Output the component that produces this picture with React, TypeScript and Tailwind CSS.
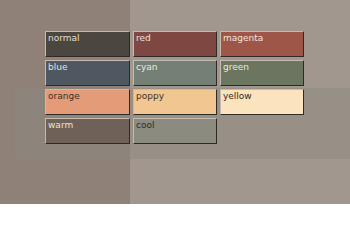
const swatches = [
  { name: 'normal', bg: 'bg-[#4b473e]', text: 'text-[#e6ded4]' },
  { name: 'red', bg: 'bg-[#7f4742]', text: 'text-[#eee2da]' },
  { name: 'magenta', bg: 'bg-[#9e5648]', text: 'text-[#f2e4dc]' },
  { name: 'blue', bg: 'bg-[#4f5861]', text: 'text-[#e2e0dc]' },
  { name: 'cyan', bg: 'bg-[#747f76]', text: 'text-[#ece8e0]' },
  { name: 'green', bg: 'bg-[#6b755f]', text: 'text-[#ece8e0]' },
  { name: 'orange', bg: 'bg-[#e39c77]', text: 'text-[#3a302a]' },
  { name: 'poppy', bg: 'bg-[#f2c690]', text: 'text-[#3a302a]' },
  { name: 'yellow', bg: 'bg-[#fbe3bd]', text: 'text-[#2e2824]' },
  { name: 'warm', bg: 'bg-[#6f6157]', text: 'text-[#ece4dc]' },
  { name: 'cool', bg: 'bg-[#8b8b80]', text: 'text-[#2e2a26]' },
]

function Swatch({ name, bg, text }: { name: string; bg: string; text: string }) {
  return (
    <div
      className={`h-[26px] border border-t-[#c4bab0] border-l-[#c4bab0] border-r-[#2e2a25] border-b-[#2e2a25] pl-[2px] pt-[1px] text-[9px] leading-[11px] ${bg} ${text}`}
      style={{ fontFamily: '"DejaVu Sans", sans-serif' }}
    >
      {name}
    </div>
  )
}

export default function App() {
  return (
    <div className="relative w-[350px] h-[204px] overflow-hidden bg-[#a1978f]">
      {/* left panel */}
      <div className="absolute left-0 top-0 w-[130px] h-[204px] bg-[#8f8178]" />
      {/* horizontal band */}
      <div className="absolute left-[15px] top-[88px] w-[335px] h-[71px] bg-[#8c8a80]/50" />
      <div className="relative pl-[45px] pt-[31px]">
        <div className="grid grid-cols-[85px_84px_84px] gap-x-[3px] gap-y-[3px]">
          {swatches.map((s) => (
            <Swatch key={s.name} {...s} />
          ))}
        </div>
      </div>
    </div>
  )
}
